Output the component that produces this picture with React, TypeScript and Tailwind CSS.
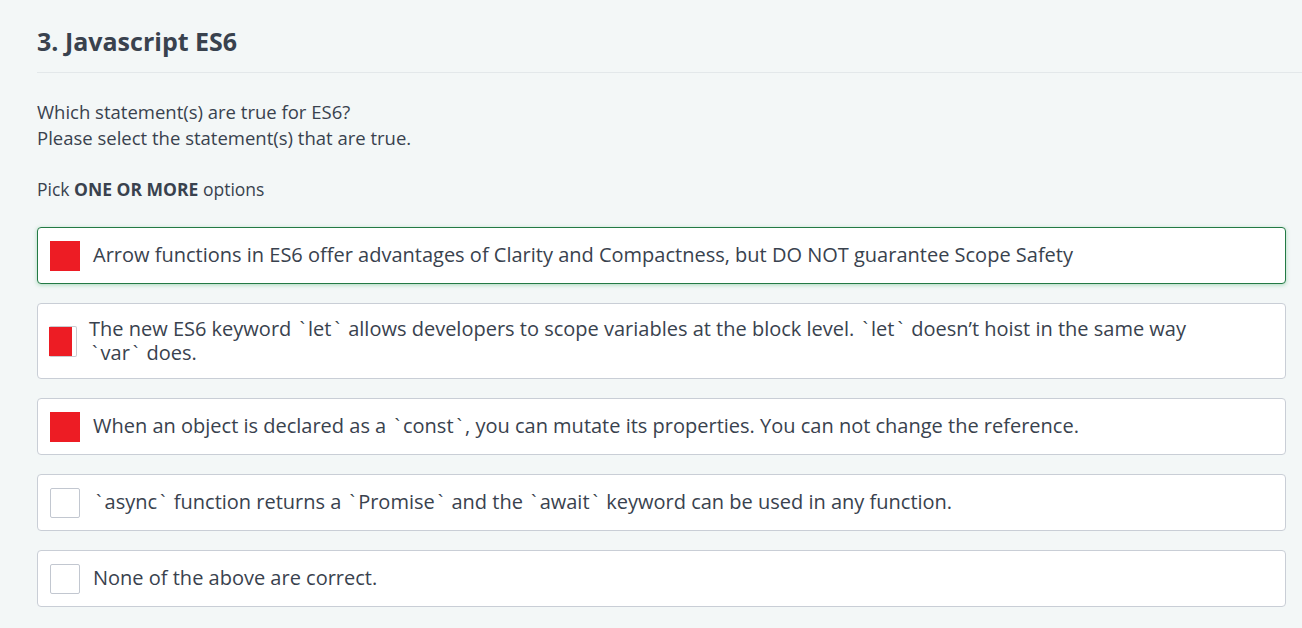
import React from 'react';

interface Option {
  text: string;
  checked: boolean;
  focused?: boolean;
  squished?: boolean;
}

const options: Option[] = [
  {
    text: 'Arrow functions in ES6 offer advantages of Clarity and Compactness, but DO NOT guarantee Scope Safety',
    checked: true,
    focused: true,
  },
  {
    text: 'The new ES6 keyword `let` allows developers to scope variables at the block level. `let` doesn\u2019t hoist in the same way `var` does.',
    checked: true,
    squished: true,
  },
  {
    text: 'When an object is declared as a `const`, you can mutate its properties. You can not change the reference.',
    checked: true,
  },
  {
    text: '`async` function returns a `Promise` and the `await` keyword can be used in any function.',
    checked: false,
  },
  {
    text: 'None of the above are correct.',
    checked: false,
  },
];

const Tick = () => <span className="inline-block px-[3px] leading-[20px]">`</span>;

// backticks render wider in the original, give them some room
const renderText = (text: string) =>
  text.split(/(`[^`]*`)/).map((part, i) =>
    part.startsWith('`') && part.endsWith('`') && part.length > 1 ? (
      <span key={i} className="whitespace-nowrap">
        <Tick />
        {part.slice(1, -1)}
        <Tick />
      </span>
    ) : (
      <React.Fragment key={i}>{part}</React.Fragment>
    )
  );

const Checkbox: React.FC<{ checked: boolean; squished?: boolean }> = ({ checked, squished }) => {
  if (squished) {
    return (
      <span className="flex shrink-0 w-[28px] h-[31px] -ml-px mr-[-1px] bg-white border border-[#c9ccd1] border-l-0 rounded-[2px]">
        <span className="block w-[23px] h-full bg-[#ed1c24]" />
      </span>
    );
  }
  return checked ? (
    <span className="block shrink-0 w-[30px] h-[30px] bg-[#ed1c24]" />
  ) : (
    <span className="block shrink-0 w-[30px] h-[30px] bg-white rounded-[2px] border border-[#c2c7d0]" />
  );
};

export default function App() {
  return (
    <div
      className="min-h-screen bg-[#f3f7f7] text-[#39424e] pt-[25px]"
      style={{ fontFamily: '"Open Sans", "Noto Sans", sans-serif' }}
    >
      <div className="pl-[37px]">
        <h2 className="text-[25px] leading-[33px] font-bold pb-[14px] border-b border-[#e3e8ea]">
          3. Javascript ES6
        </h2>
      </div>
      <div className="pl-[37px] pr-[16px]">
        <div className="pt-[26px] text-[18.5px] leading-[26px]">
          <p>Which statement(s) are true for ES6?</p>
          <p>Please select the statement(s) that are true.</p>
        </div>
        <p className="mt-[25px] text-[17.5px] leading-[26px]">
          Pick <strong className="font-bold">ONE OR MORE</strong> options
        </p>
        <div className="mt-[25px] flex flex-col gap-[19px]">
          {options.map((o, i) => (
            <div
              key={i}
              className={
                o.focused
                  ? 'flex items-center gap-[13px] bg-white rounded-[4px] border border-[#237a45] shadow-[0_1px_4px_rgba(35,160,80,0.35)] pl-[12px] pr-[12px] py-[12.5px]'
                  : 'flex items-center gap-[13px] bg-white rounded-[4px] border border-[#c9ced6] pl-[12px] pr-[12px] py-[12.5px]'
              }
            >
              <Checkbox checked={o.checked} squished={o.squished} />
              <span className="text-[20px] leading-[24.5px] pr-[70px]">{renderText(o.text)}</span>
            </div>
          ))}
        </div>
      </div>
    </div>
  );
}
